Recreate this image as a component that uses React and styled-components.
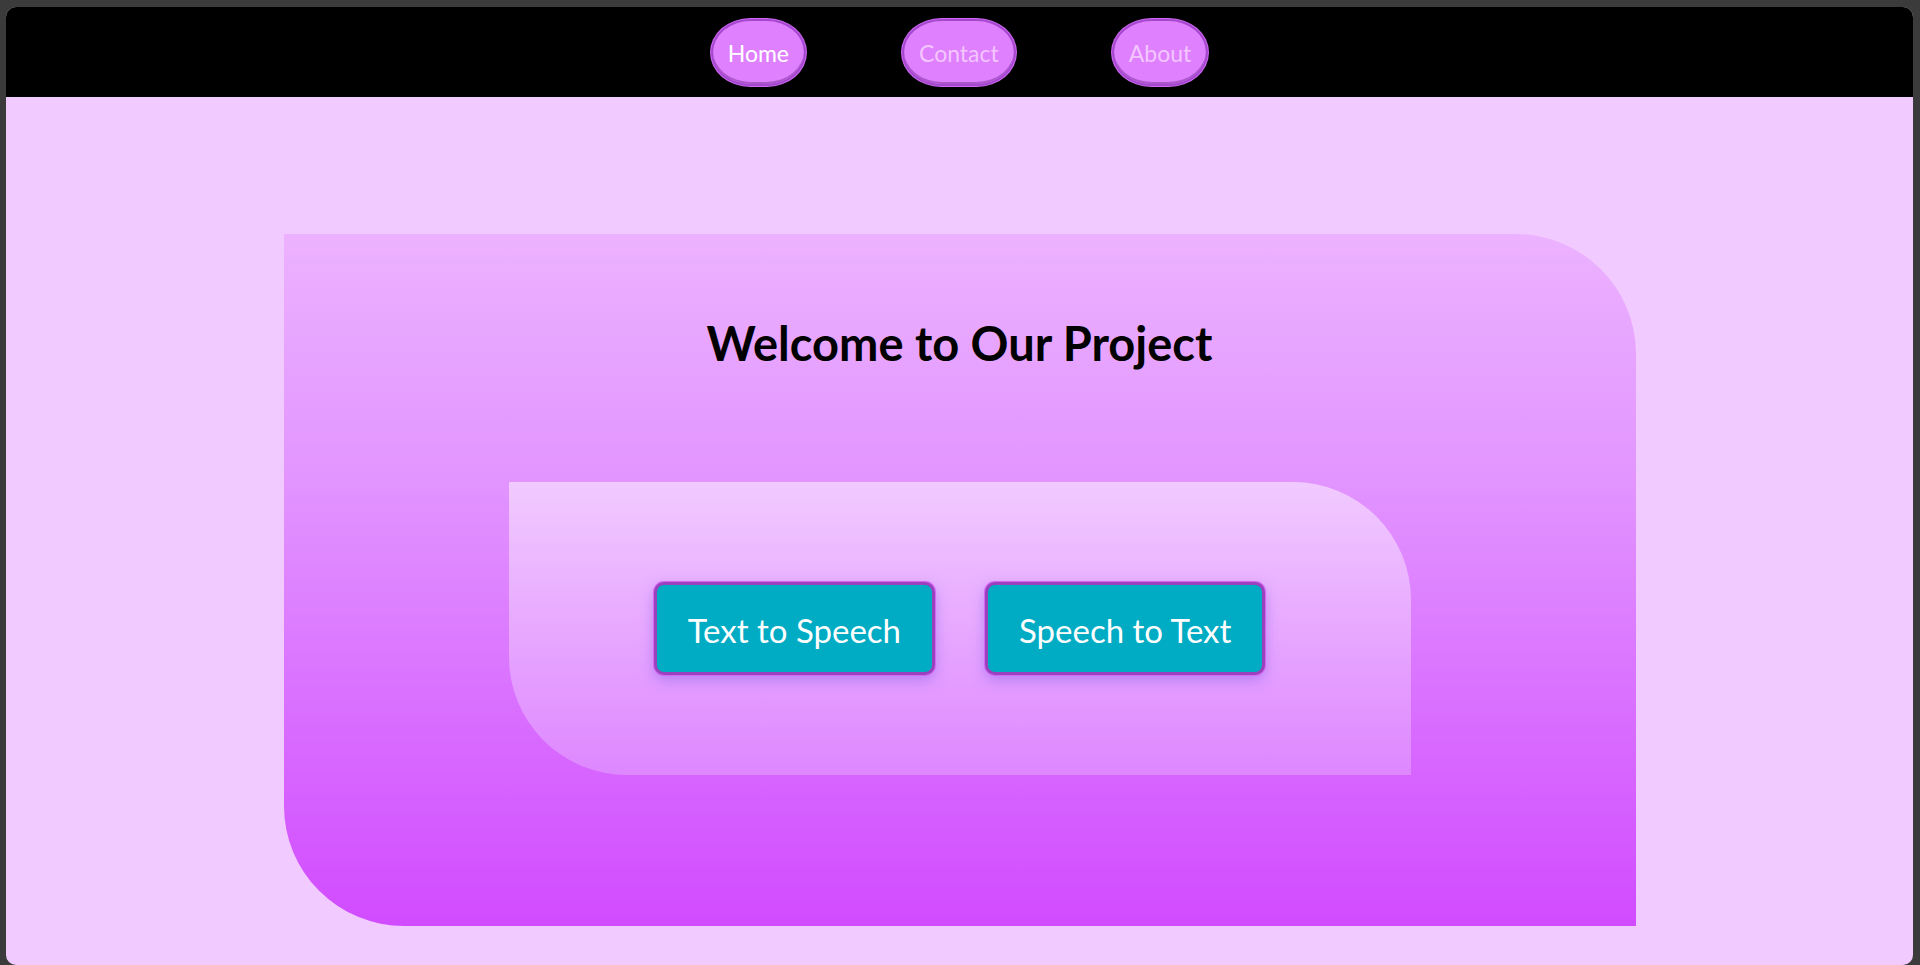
import React from 'react';
import styled, { createGlobalStyle } from 'styled-components';

const GlobalStyle = createGlobalStyle`
  html, body {
    margin: 0;
    padding: 0;
    background: #3b3b3b;
    font-family: "Segoe UI", Lato, "Open Sans", sans-serif;
  }
  * { box-sizing: border-box; }
`;

/* outer window frame */
const Frame = styled.div`
  padding: 7px 7px 0 6px;
  height: 965px;
  overflow: hidden;
`;

const Window = styled.div`
  height: 958px;
  border-radius: 10px;
  overflow: hidden;
  background: #f1cbff;
  display: flex;
  flex-direction: column;
`;

const NavBar = styled.nav`
  height: 90px;
  background: #000;
  display: flex;
  align-items: center;
  justify-content: center;
  gap: 96px;
  flex-shrink: 0;
`;

const NavPill = styled.a`
  display: block;
  padding: 18px 15px 16px;
  line-height: 29px;
  font-size: 23px;
  border-radius: 40px / 34px;
  background: #df80ff;
  color: ${p => (p.$active ? '#ffffff' : '#f4c6ff')};
  border: 2px solid #a548cf;
  box-shadow: 0 0 0 1px #cf68f4, inset 0 -2px 0 rgba(110, 40, 140, 0.45);
  text-decoration: none;
  cursor: pointer;
`;

const Main = styled.main`
  flex: 1;
  display: flex;
  justify-content: center;
  padding-top: 137px;
`;

const Card = styled.section`
  width: 1352px;
  height: 692px;
  border-radius: 0 120px 0 120px;
  background: linear-gradient(to bottom, #ecb2ff 0%, #e295ff 35%, #d14bff 100%);
  display: flex;
  flex-direction: column;
  align-items: center;
  padding-top: 80px;
`;

const Title = styled.h1`
  margin: 0;
  font-size: 47px;
  line-height: 58px;
  font-weight: 700;
  color: #000;
`;

const Panel = styled.div`
  margin-top: 110px;
  width: 902px;
  height: 293px;
  border-radius: 0 118px 0 118px;
  background: linear-gradient(to bottom, #f1caff, #de87ff);
  display: flex;
  align-items: center;
  justify-content: center;
  gap: 50px;
`;

const ActionButton = styled.button`
  font-family: inherit;
  font-size: 33px;
  line-height: 39px;
  padding: 26px 31px 22px;
  color: #fff;
  background: #00abc4;
  border: 3px solid #9a42bd;
  border-radius: 10px;
  box-shadow: 0 0 0 1px #d566f4, 0 5px 14px rgba(150, 110, 235, 0.65);
  cursor: pointer;
`;

export default function App() {
  return (
    <>
      <GlobalStyle />
      <Frame>
        <Window>
          <NavBar>
            <NavPill $active>Home</NavPill>
            <NavPill>Contact</NavPill>
            <NavPill>About</NavPill>
          </NavBar>
          <Main>
            <Card>
              <Title>Welcome to Our Project</Title>
              <Panel>
                <ActionButton>Text to Speech</ActionButton>
                <ActionButton>Speech to Text</ActionButton>
              </Panel>
            </Card>
          </Main>
        </Window>
      </Frame>
    </>
  );
}
